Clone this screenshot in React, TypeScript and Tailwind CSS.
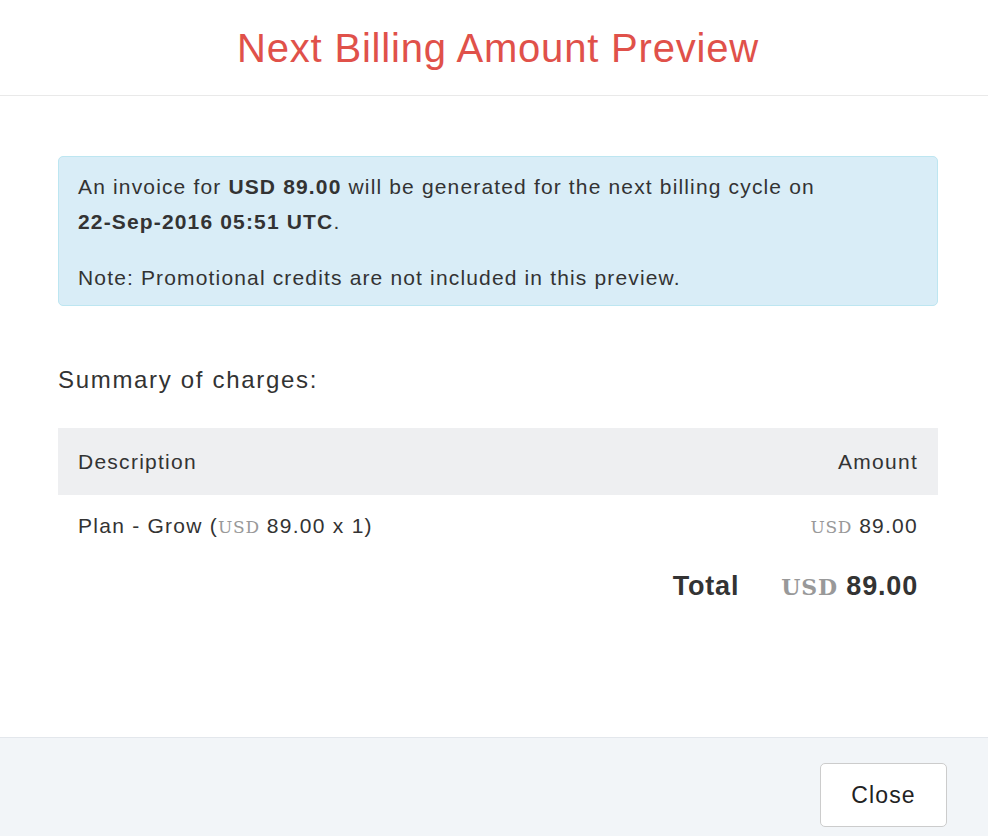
import React from 'react';

const sans = { fontFamily: '"Liberation Sans", Arial, sans-serif' };

function Currency({ bold = false }: { bold?: boolean }) {
  return (
    <span
      className={`tracking-[0.04em] text-[#999] ${bold ? 'text-[22px] font-bold' : 'text-[17px]'}`}
      style={{ fontFamily: '"DejaVu Serif", "Liberation Serif", serif' }}
    >
      USD
    </span>
  );
}

export default function App() {
  return (
    <div className="h-[836px] w-[988px] overflow-hidden bg-white text-[#333]" style={sans}>
      <div className="flex h-full w-[996px] flex-col">
        {/* Header */}
        <div className="flex h-[96px] shrink-0 items-center justify-center border-b border-[#e9e9e9]">
          <h1 className="text-[40px] leading-none tracking-[0.02em] text-[#e0514a]">Next Billing Amount Preview</h1>
        </div>

        {/* Body */}
        <div className="flex-1 px-[58px] pt-[60px]">
          <div className="rounded-[5px] border border-[#bde6f1] bg-[#d9edf7] px-[19px] pt-[12px] pb-[10px] text-[21px] leading-[35px] tracking-[0.055em]">
            <p>
              An invoice for <b>USD 89.00</b> will be generated for the next billing cycle on{' '}
              <b className="whitespace-nowrap">22-Sep-2016 05:51 UTC</b>.
            </p>
            <p className="mt-[21px]">Note: Promotional credits are not included in this preview.</p>
          </div>

          <p className="mt-[58px] text-[24px] leading-[32px] tracking-[0.07em]">Summary of charges:</p>

          <div className="mt-[32px] text-[21px] tracking-[0.06em]">
            <div className="flex h-[67px] items-center justify-between bg-[#eeeff1] px-[20px]">
              <span>Description</span>
              <span>Amount</span>
            </div>
            <div className="flex h-[62px] items-center justify-between px-[20px]">
              <span>
                Plan - Grow (<Currency /> 89.00 x 1)
              </span>
              <span>
                <Currency /> 89.00
              </span>
            </div>
            <div className="flex items-center justify-end gap-[42px] px-[20px] pt-[9px] text-[27px] font-bold tracking-[0.03em]">
              <span>Total</span>
              <span>
                <Currency bold /> 89.00
              </span>
            </div>
          </div>
        </div>

        {/* Footer */}
        <div className="flex h-[99px] shrink-0 items-start justify-end border-t border-[#e3e7ec] bg-[#f2f5f8] pr-[49px] pt-[25px]">
          <button className="h-[64px] w-[127px] rounded-[5px] border border-[#cccccc] bg-white text-[23px] tracking-[0.05em] text-[#222]">
            Close
          </button>
        </div>
      </div>
    </div>
  );
}
